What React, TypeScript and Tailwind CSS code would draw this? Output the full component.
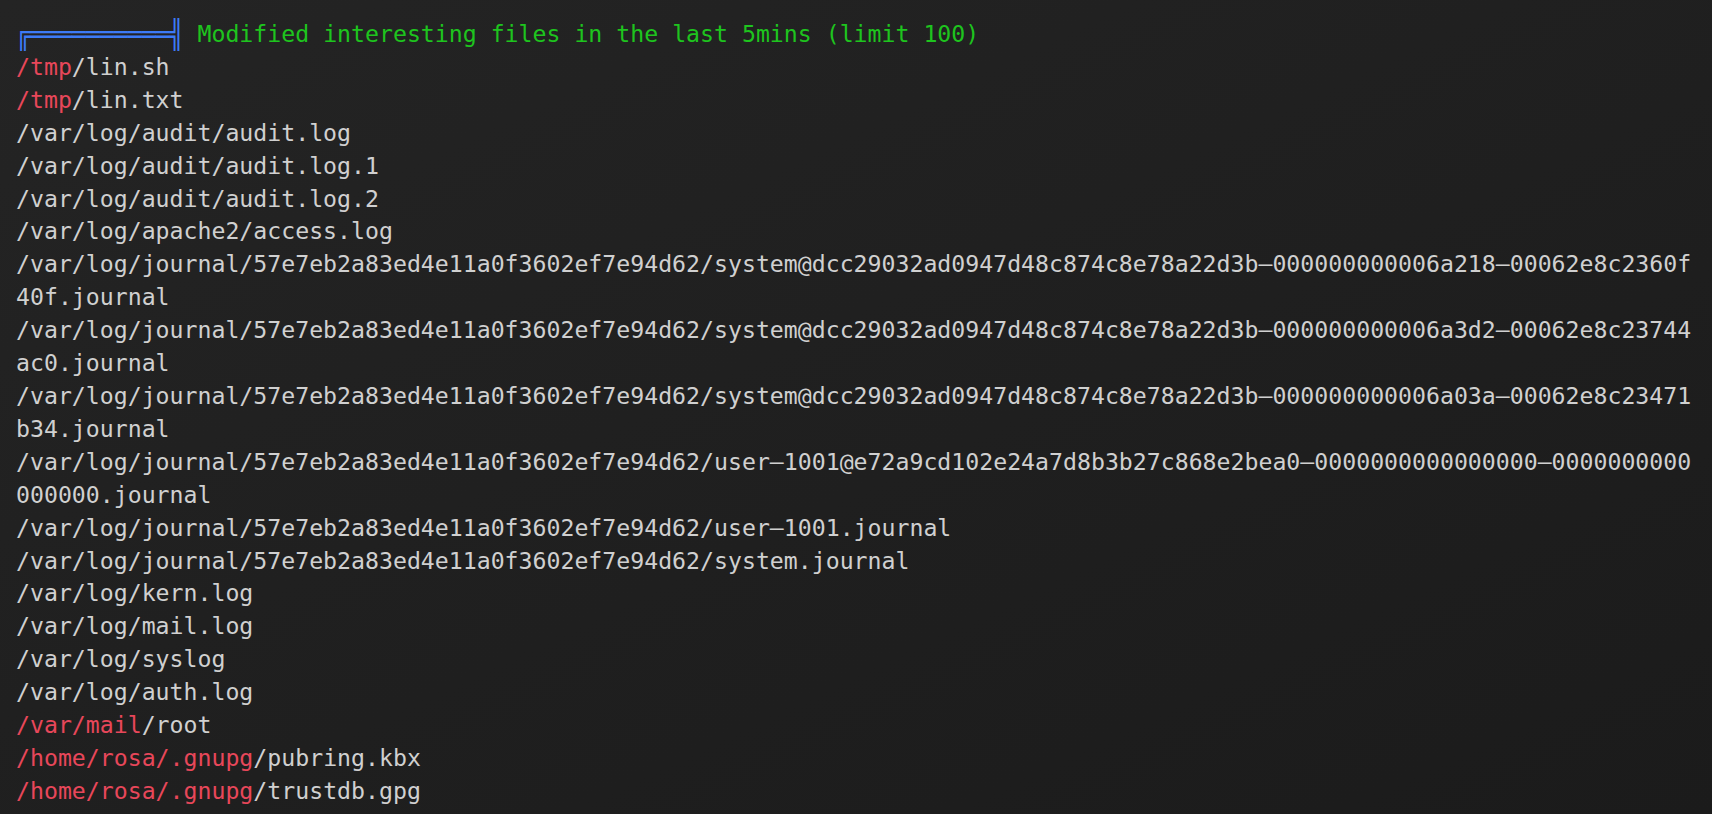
const files: [string, string][] = [
  ["/tmp", "/lin.sh"],
  ["/tmp", "/lin.txt"],
  ["", "/var/log/audit/audit.log"],
  ["", "/var/log/audit/audit.log.1"],
  ["", "/var/log/audit/audit.log.2"],
  ["", "/var/log/apache2/access.log"],
  [
    "",
    "/var/log/journal/57e7eb2a83ed4e11a0f3602ef7e94d62/system@dcc29032ad0947d48c874c8e78a22d3b–000000000006a218–00062e8c2360f40f.journal",
  ],
  [
    "",
    "/var/log/journal/57e7eb2a83ed4e11a0f3602ef7e94d62/system@dcc29032ad0947d48c874c8e78a22d3b–000000000006a3d2–00062e8c23744ac0.journal",
  ],
  [
    "",
    "/var/log/journal/57e7eb2a83ed4e11a0f3602ef7e94d62/system@dcc29032ad0947d48c874c8e78a22d3b–000000000006a03a–00062e8c23471b34.journal",
  ],
  [
    "",
    "/var/log/journal/57e7eb2a83ed4e11a0f3602ef7e94d62/user–1001@e72a9cd102e24a7d8b3b27c868e2bea0–0000000000000000–0000000000000000.journal",
  ],
  ["", "/var/log/journal/57e7eb2a83ed4e11a0f3602ef7e94d62/user–1001.journal"],
  ["", "/var/log/journal/57e7eb2a83ed4e11a0f3602ef7e94d62/system.journal"],
  ["", "/var/log/kern.log"],
  ["", "/var/log/mail.log"],
  ["", "/var/log/syslog"],
  ["", "/var/log/auth.log"],
  ["/var/mail", "/root"],
  ["/home/rosa/.gnupg", "/pubring.kbx"],
  ["/home/rosa/.gnupg", "/trustdb.gpg"],
];

const App = () => {
  return (
    <main className="min-h-screen w-full overflow-hidden bg-gradient-to-br from-[#242424] to-[#1b1b1b] pl-4 pt-[18px] font-['DejaVu_Sans_Mono',monospace] text-[23.2px] leading-[32.9px] text-[#d0d0d0]">
      <div className="w-[calc(120ch+3px)] break-all whitespace-pre-wrap">
        {/* section header, linpeas style */}
        <p>
          <span className="inline-block scale-y-[1.2] text-[#3d7bf7]">╔══════════╣</span>
          <span className="text-[#1ec41e]"> Modified interesting files in the last 5mins (limit 100)</span>
        </p>
        {files.map(([hot, rest], i) => (
          <p key={i}>
            {hot && <span className="text-[#e8475a]">{hot}</span>}
            {rest}
          </p>
        ))}
      </div>
    </main>
  );
};

export default App;
